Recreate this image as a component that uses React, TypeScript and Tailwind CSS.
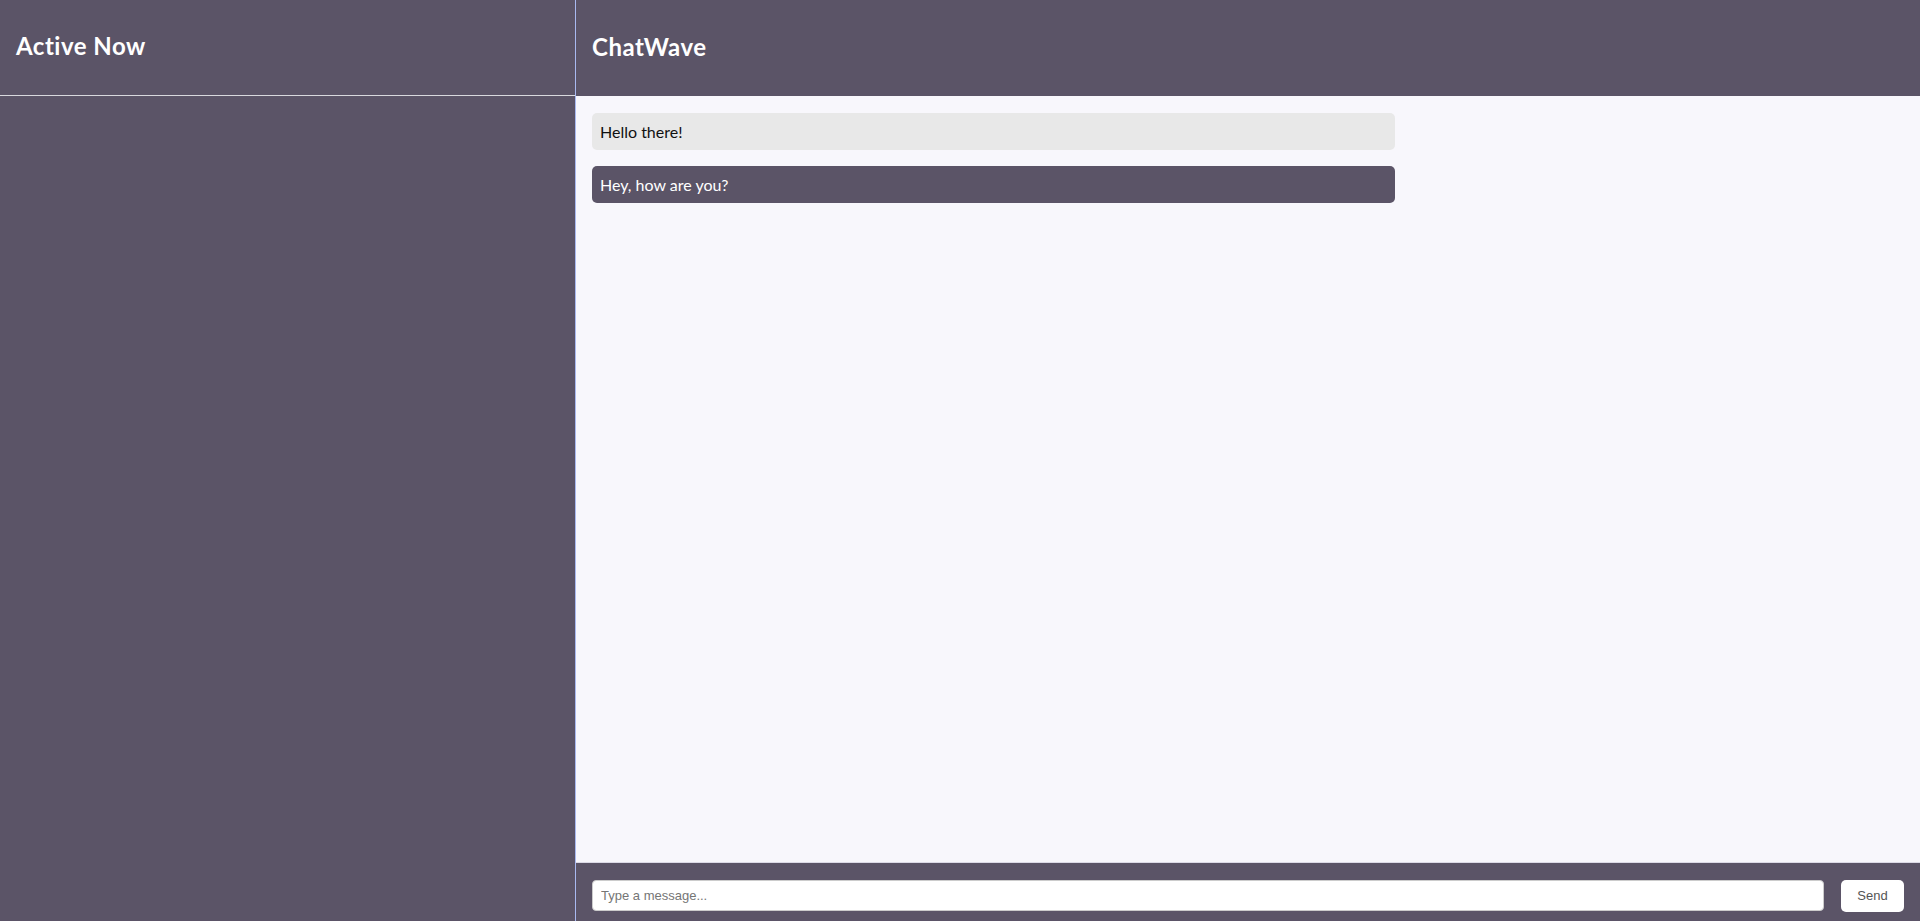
import { useState } from "react";

type Message = { id: number; text: string; mine: boolean };

const initial: Message[] = [
  { id: 1, text: "Hello there!", mine: false },
  { id: 2, text: "Hey, how are you?", mine: true },
];

export default function App() {
  const [messages, setMessages] = useState<Message[]>(initial);
  const [draft, setDraft] = useState("");

  function send() {
    if (!draft.trim()) return;
    setMessages([...messages, { id: Date.now(), text: draft, mine: true }]);
    setDraft("");
  }

  return (
    <div
      className="flex h-screen w-full overflow-hidden"
      style={{ fontFamily: '"Lato", "Open Sans", sans-serif' }}
    >
      {/* sidebar */}
      <div className="flex w-[576px] shrink-0 flex-col border-r border-[#a9b9f0] bg-[#5b5467]">
        <div className="flex h-[96px] items-center border-b border-[#d9d9de] px-4 pb-[3px]">
          <h2 className="text-2xl font-bold tracking-[0.5px] text-white">Active Now</h2>
        </div>
        <div className="flex-1"></div>
      </div>

      {/* chat */}
      <div className="flex flex-1 flex-col bg-[#f8f7fc]">
        <div className="flex h-[96px] items-center bg-[#5b5467] px-4 pb-[3px]">
          <h1 className="text-2xl font-bold tracking-[0.5px] text-white">ChatWave</h1>
        </div>

        <div className="flex flex-1 flex-col gap-4 overflow-y-auto p-4 pt-[17px]">
          {messages.map((m) => (
            <div
              key={m.id}
              className={
                m.mine
                  ? "w-[803px] rounded-[5px] bg-[#5b5467] px-2 py-[6px] text-base leading-[25px] text-white"
                  : "w-[803px] rounded-[5px] bg-[#e8e8e8] px-2 py-[6px] text-base leading-[25px] text-[#111]"
              }
            >
              {m.text}
            </div>
          ))}
        </div>

        <div className="flex h-[59px] shrink-0 items-start border-t border-[#dcdae6] bg-[#5b5467] px-4 pt-[17px]">
          <input
            value={draft}
            onChange={(e) => setDraft(e.target.value)}
            onKeyDown={(e) => e.key === "Enter" && send()}
            placeholder="Type a message..."
            className="h-[31px] flex-1 rounded-[4px] border border-[#ccc] bg-white px-2 text-[13px] text-[#333] outline-none placeholder:text-[#757575]"
            style={{ fontFamily: '"Liberation Sans", Arial, sans-serif' }}
          />
          <button
            onClick={send}
            className="ml-[17px] h-[32px] w-[63px] rounded-[5px] bg-white text-[13px] text-[#555]"
            style={{ fontFamily: '"Liberation Sans", Arial, sans-serif' }}
          >
            Send
          </button>
        </div>
      </div>
    </div>
  );
}
